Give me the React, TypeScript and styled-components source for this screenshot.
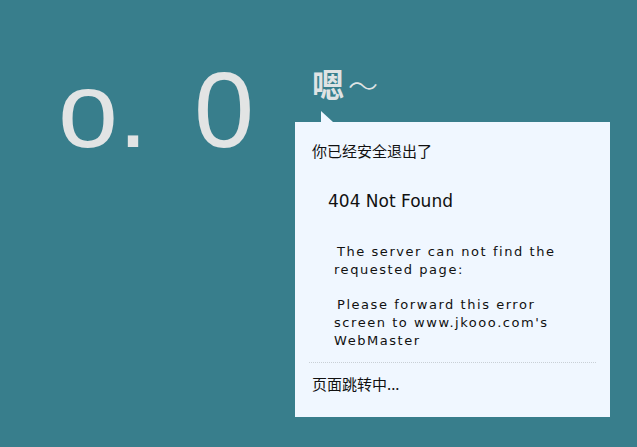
import React from 'react';
import styled, { createGlobalStyle } from 'styled-components';

const GlobalStyle = createGlobalStyle`
  html, body {
    margin: 0;
    padding: 0;
    background: #387e8c;
  }
  body {
    font-family: 'DejaVu Sans', Verdana, 'Noto Sans CJK SC', sans-serif;
  }
`;

const Page = styled.div`
  display: flex;
  align-items: flex-start;
  width: 637px;
  height: 447px;
  box-sizing: border-box;
  padding: 0 0 0 58px;
  overflow: hidden;
`;

const Face = styled.div`
  font-family: 'Liberation Sans', Arial, sans-serif;
  font-size: 108px;
  line-height: 1;
  color: #e2e4e4;
  margin-top: 56px;
  width: 237px;
  white-space: pre;
  word-spacing: 16px;
`;

const Side = styled.div`
  display: flex;
  flex-direction: column;
  width: 315px;
`;

const Sigh = styled.div`
  font-family: 'Noto Sans CJK SC', sans-serif;
  font-size: 32px;
  line-height: 40px;
  color: #dfe3e4;
  margin: 63px 0 18px 17px;
  font-weight: 700;
`;

const Tilde = styled.span`
  display: inline-block;
  font-weight: 300;
  font-size: 30px;
  margin-left: 4px;
`;

const Panel = styled.div`
  position: relative;
  background: #f0f7ff;
  height: 295px;
  box-sizing: border-box;
  padding: 19px 14px 0 17px;
  color: #111;

  &::before {
    content: '';
    position: absolute;
    left: 26px;
    top: -11px;
    border-left: 12px solid #f0f7ff;
    border-top: 11px solid transparent;
  }
`;

const Note = styled.div<{ $top?: number }>`
  font-family: 'Noto Sans CJK SC', sans-serif;
  font-size: 15px;
  line-height: 20px;
  color: #111;
  margin-top: ${(p) => p.$top ?? 0}px;
`;

const Title = styled.h1`
  font-family: 'DejaVu Sans', Verdana, sans-serif;
  font-weight: normal;
  font-size: 17px;
  line-height: 22px;
  margin: 29px 0 0 16px;
  color: #111;
`;

const Para = styled.p<{ $top: number }>`
  font-family: 'DejaVu Sans', Verdana, sans-serif;
  font-size: 13px;
  letter-spacing: 1.55px;
  line-height: 18px;
  width: 230px;
  margin: ${(p) => p.$top}px 0 0 22px;
  text-indent: 3px;
  color: #111;
`;

const Rule = styled.hr`
  border: 0;
  border-top: 1px dotted #c9d0d6;
  margin: 12px 0 0 -3px;
`;

export default function App() {
  return (
    <>
      <GlobalStyle />
      <Page>
        <Face>o. 0</Face>
        <Side>
          <Sigh>
            嗯<Tilde>～</Tilde>
          </Sigh>
          <Panel>
            <Note>你已经安全退出了</Note>
            <Title>404 Not Found</Title>
            <Para $top={31}>The server can not find the requested page:</Para>
            <Para $top={17}>Please forward this error screen to www.jkooo.com's WebMaster</Para>
            <Rule />
            <Note $top={11}>页面跳转中...</Note>
          </Panel>
        </Side>
      </Page>
    </>
  );
}
